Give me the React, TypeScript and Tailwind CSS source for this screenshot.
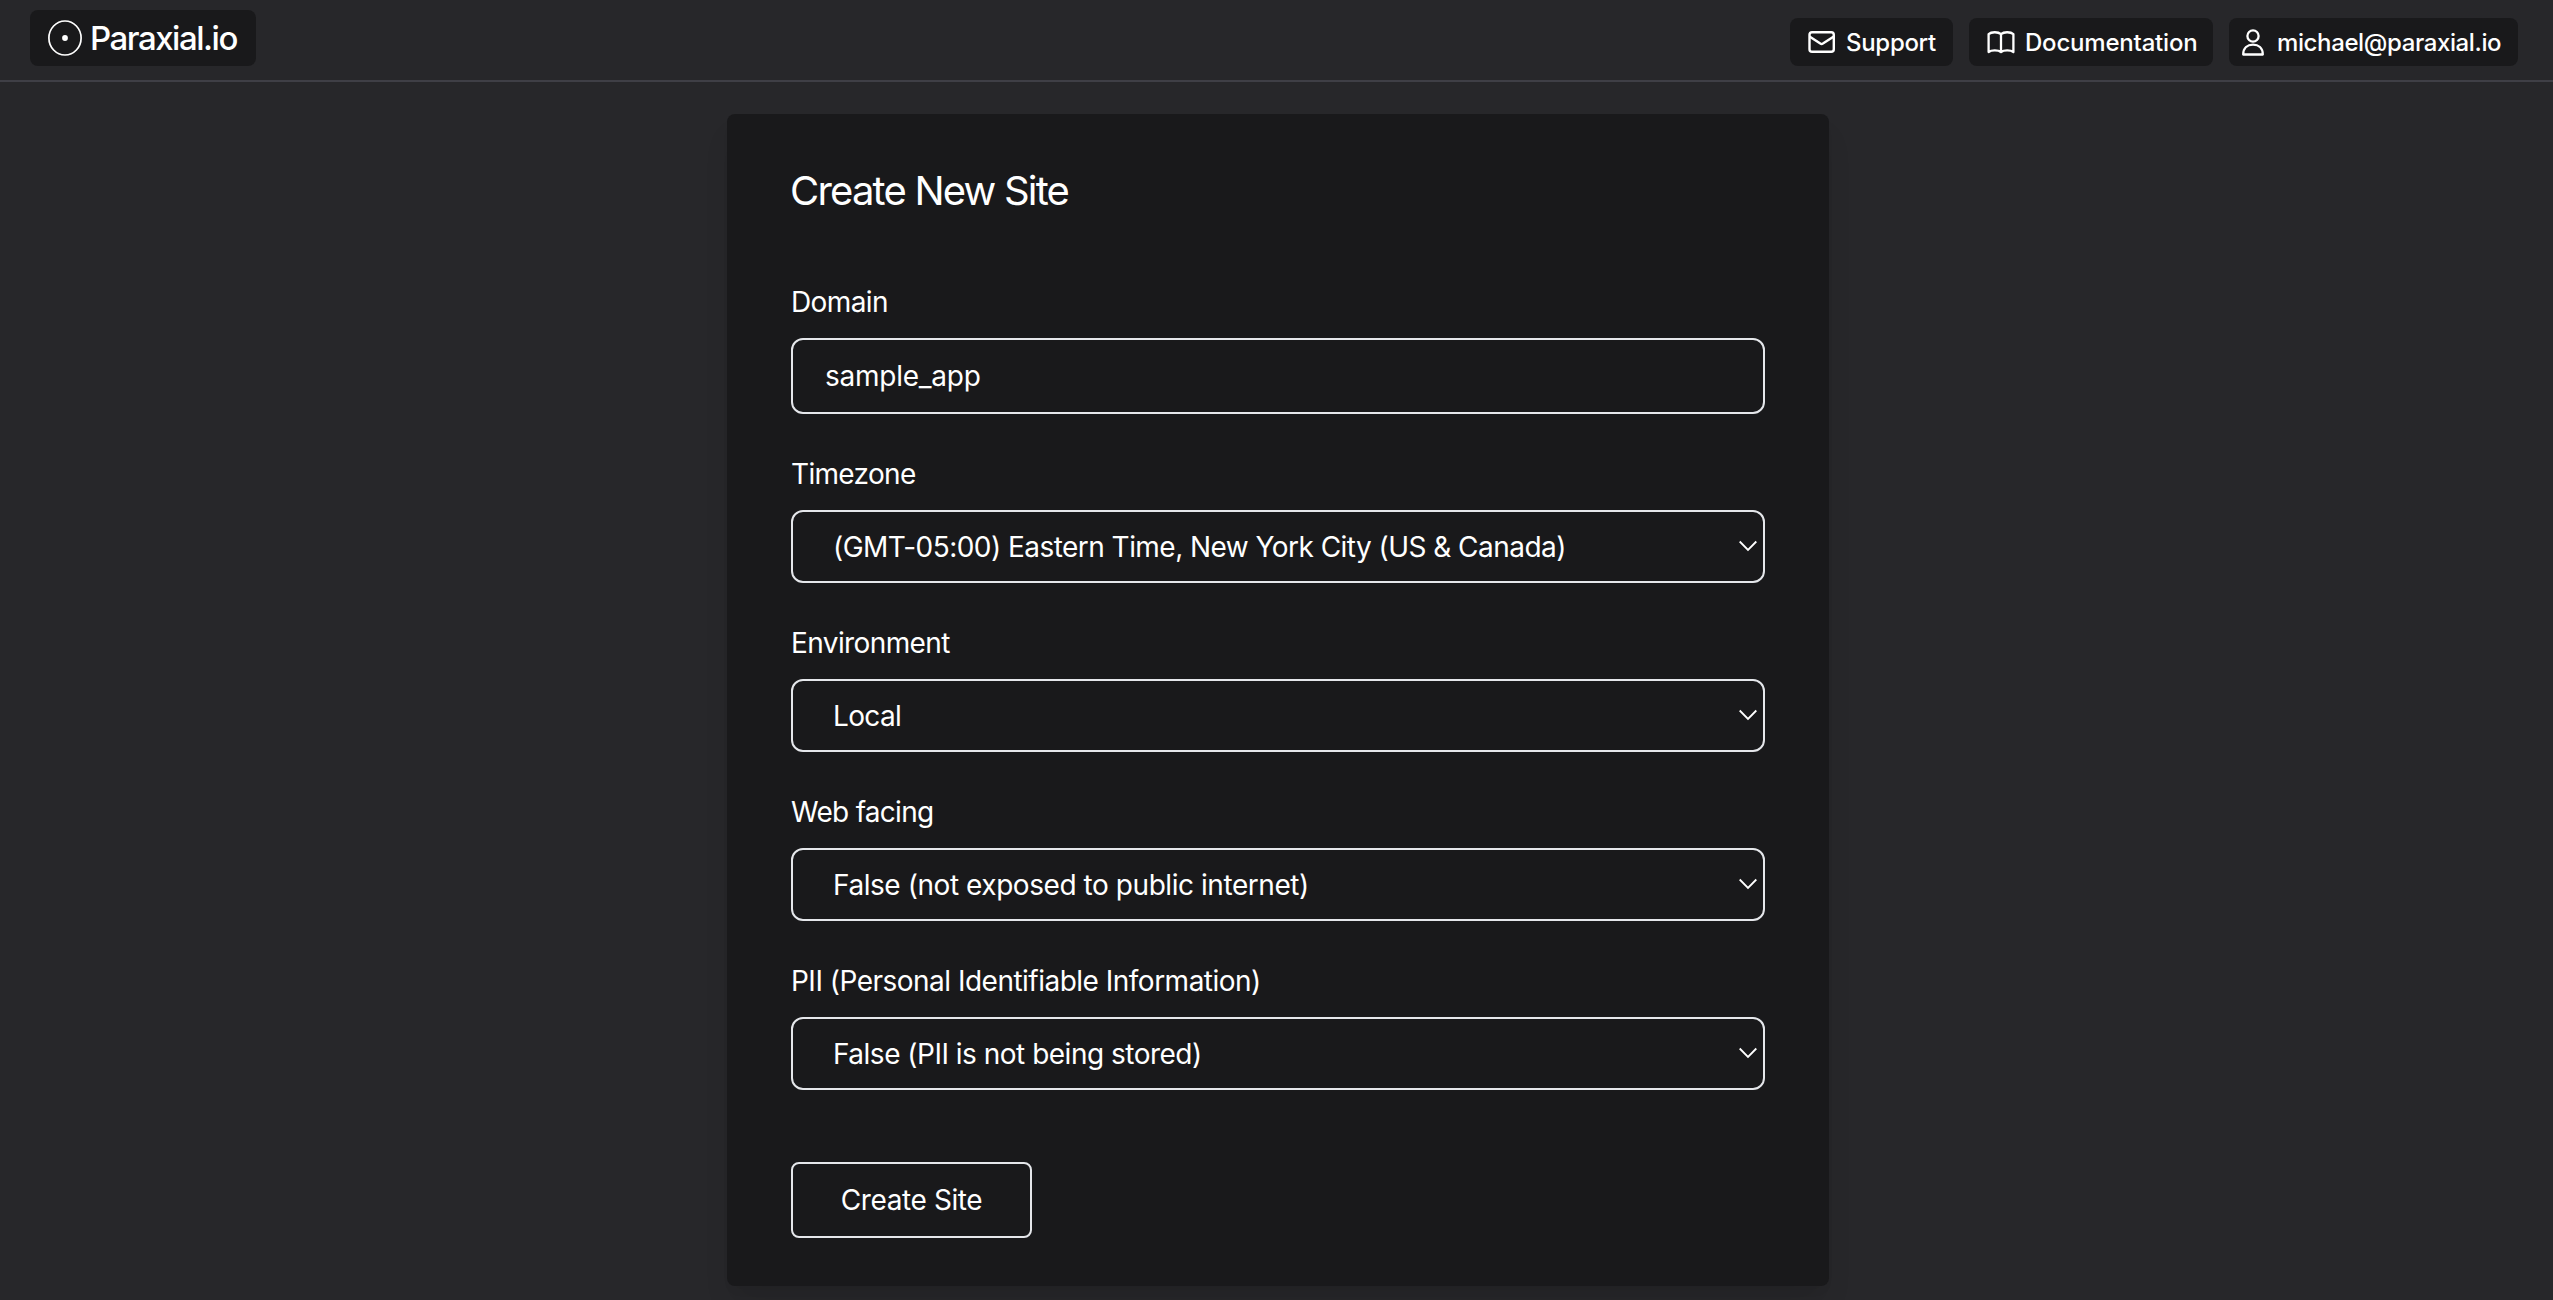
import type { ReactNode } from "react";

function LogoMark() {
  return (
    <svg className="h-[36px] w-[34px] shrink-0" viewBox="0 0 34 36" fill="none">
      <ellipse cx="17" cy="18" rx="16.1" ry="17" stroke="white" strokeWidth="1.7" />
      <circle cx="17" cy="18" r="2.9" fill="white" />
    </svg>
  );
}

function MailIcon() {
  return (
    <svg className="h-[22px] w-[27px] shrink-0" viewBox="0 0 27 22" fill="none" stroke="white" strokeWidth="2.4" strokeLinejoin="round">
      <rect x="1.5" y="1.2" width="24.3" height="19.6" rx="2.6" />
      <path d="M1.5 5.4 L12.3 12.6 Q13.6 13.4 14.9 12.6 L25.8 5.4" />
    </svg>
  );
}

function BookIcon() {
  return (
    <svg className="h-[23px] w-[28px] shrink-0" viewBox="0 0 28 23" fill="none" stroke="white" strokeWidth="2.3" strokeLinecap="round" strokeLinejoin="round">
      <path d="M14 3.2 C11.2 .7 4.6 .5 1.6 3.2 V21 C4.6 18.8 11.2 19 14 21 C16.8 19 23.4 18.8 26.4 21 V3.2 C23.4 .5 16.8 .7 14 3.2 V21" />
    </svg>
  );
}

function UserIcon() {
  return (
    <svg className="h-[27px] w-[22px] shrink-0" viewBox="0 0 22 27" fill="none" stroke="white" strokeWidth="2.3" strokeLinejoin="round">
      <circle cx="11" cy="7" r="5.6" />
      <path d="M1.2 25.5 C1.2 19 5.5 15.6 11 15.6 C16.5 15.6 20.8 19 20.8 25.5 Z" />
    </svg>
  );
}

function NavButton({ className, children }: { className: string; children: ReactNode }) {
  return (
    <a className={`flex h-12 items-center rounded-lg bg-[#19191b] text-2xl font-medium whitespace-nowrap ${className}`}>
      {children}
    </a>
  );
}

function Field({ label, labelClass, children }: { label: string; labelClass: string; children: ReactNode }) {
  return (
    <div className="mb-10">
      <label className={`mb-4 block h-10 leading-10 whitespace-nowrap ${labelClass}`}>{label}</label>
      {children}
    </div>
  );
}

function Select({ value, textClass }: { value: string; textClass: string }) {
  return (
    <div className="flex h-[73px] items-center justify-between rounded-xl border-2 border-gray-200 pr-[6px] pl-10">
      <span className={`whitespace-nowrap ${textClass}`}>{value}</span>
      <svg className="mb-[2px] h-[12px] w-[18px]" viewBox="0 0 18 12" fill="none" stroke="white" strokeWidth="1.8">
        <path d="M.7 1.5 L9 9.9 L17.3 1.5" />
      </svg>
    </div>
  );
}

export default function App() {
  return (
    <div className="h-[1300px] overflow-hidden bg-[#27272a] font-[Inter,sans-serif] text-white antialiased">
      <header className="flex h-[82px] items-start justify-between border-b-2 border-[#3f3f46] pr-[35px] pl-[30px]">
        <a className="mt-[10px] flex h-14 w-[226px] items-center rounded-lg bg-[#19191b] pl-[18px]">
          <LogoMark />
          <span className="ml-[8px] pt-[2px] text-[33px] font-medium tracking-[-1.48px] whitespace-nowrap">Paraxial.io</span>
        </a>
        <nav className="mt-[18px] flex gap-4">
          <NavButton className="w-[163px] pl-[18px]">
            <MailIcon />
            <span className="ml-[11px] pt-[2px] tracking-[-0.3px]">Support</span>
          </NavButton>
          <NavButton className="w-[244px] pl-[18px]">
            <BookIcon />
            <span className="ml-[10px] pt-[2px] tracking-[-0.2px]">Documentation</span>
          </NavButton>
          <NavButton className="w-[289px] pl-[13px]">
            <UserIcon />
            <span className="ml-[13px] pt-[2px] tracking-[-0.38px]">michael@paraxial.io</span>
          </NavButton>
        </nav>
      </header>

      <form className="mt-8 ml-[727px] h-[1172px] w-[1102px] rounded-lg bg-[#19191b] px-16 pt-[53px] text-[28px] shadow-[0_20px_30px_-6px_rgba(0,0,0,0.1),0_8px_12px_-8px_rgba(0,0,0,0.1)]">
        <h1 className="mb-[67px] -ml-px h-12 text-[40px] leading-[48px] tracking-[-1.8px] whitespace-nowrap">Create New Site</h1>

        <Field label="Domain" labelClass="tracking-[-0.6px]">
          <div className="flex h-[76px] items-center rounded-xl border-2 border-gray-200 px-8">
            <span className="tracking-[-0.24px]">sample_app</span>
          </div>
        </Field>
        <Field label="Timezone" labelClass="tracking-[-0.68px]">
          <Select value="(GMT-05:00) Eastern Time, New York City (US & Canada)" textClass="tracking-[-0.54px]" />
        </Field>
        <Field label="Environment" labelClass="tracking-[-0.6px]">
          <Select value="Local" textClass="tracking-[-0.65px]" />
        </Field>
        <Field label="Web facing" labelClass="tracking-[-0.72px]">
          <Select value="False (not exposed to public internet)" textClass="tracking-[-0.44px]" />
        </Field>
        <Field label="PII (Personal Identifiable Information)" labelClass="tracking-[-0.51px]">
          <Select value="False (PII is not being stored)" textClass="tracking-[-0.5px]" />
        </Field>

        <button type="button" className="mt-[72px] flex h-[76px] w-[241px] items-center justify-center rounded-lg border-2 border-gray-200 tracking-[-0.4px]">
          Create Site
        </button>
      </form>
    </div>
  );
}
